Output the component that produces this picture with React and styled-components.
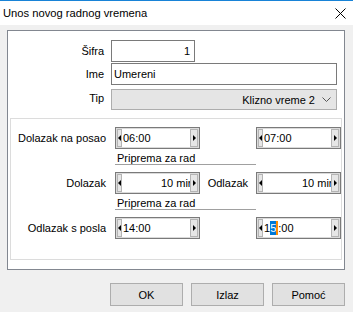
import React from "react";
import styled, { createGlobalStyle } from "styled-components";

const Global = createGlobalStyle`
  html, body { margin: 0; padding: 0; background: #f0f0f0; }
  body { font-family: "Liberation Sans", Arial, sans-serif; font-size: 11px; color: #000; }
  * { box-sizing: border-box; }
`;

const Window = styled.div`
  width: 353px;
  height: 312px;
  background: #f0f0f0;
  display: flex;
  flex-direction: column;
  overflow: hidden;
`;

const TitleBar = styled.div`
  height: 25px;
  flex: none;
  background: #fff;
  border-top: 1px solid #1883d7;
  display: flex;
  align-items: center;
  justify-content: space-between;
  padding: 0 7px 0 3px;
`;

const Title = styled.div`
  font-size: 11.2px;
`;

const Close = styled.svg`
  width: 11px;
  height: 11px;
  display: block;
`;

const Body = styled.div`
  padding: 5px 8px 0 7px;
  display: flex;
  flex-direction: column;
`;

const Panel = styled.div`
  height: 240px;
  background: #fff;
  border: 1px solid #828790;
  padding: 9px 1px 0 1px;
  display: flex;
  flex-direction: column;
`;

const FieldGrid = styled.div`
  display: grid;
  grid-template-columns: 95px 226px;
  column-gap: 7px;
  row-gap: 1px;
  align-items: center;
`;

const Label = styled.div`
  text-align: right;
  white-space: nowrap;
`;

const TextBox = styled.div`
  height: 22px;
  width: ${(p) => p.$w}px;
  border: 1px solid #7a7a7a;
  background: #fff;
  display: flex;
  align-items: center;
  justify-content: ${(p) => (p.$right ? "flex-end" : "flex-start")};
  padding: 0 4px 0 2px;
`;

const Combo = styled.div`
  height: 21px;
  width: 226px;
  margin-top: 3px;
  border: 1px solid #adadad;
  background: #e5e5e5;
  display: flex;
  align-items: center;
  justify-content: flex-end;
  padding-right: 5px;
  gap: 7px;
`;

const Group = styled.div`
  margin: 8px 1px 0 1px;
  height: 142px;
  border: 1px solid #dcdcdc;
  padding: 8px 0 0 0;
  display: grid;
  grid-template-columns: 104px 85px 56px 85px;
  align-content: start;
`;

const GLabel = styled.div`
  text-align: right;
  white-space: nowrap;
  padding-right: ${(p) => p.$pr || 9}px;
  align-self: center;
`;

const Spin = styled.div`
  height: 22px;
  width: 85px;
  border: 1px solid #7a7a7a;
  box-shadow: inset 0 0 0 1px #dadada;
  background: #fff;
  display: flex;
  align-items: stretch;
  padding: 1px;
  overflow: hidden;
`;

const SpinBtn = styled.div`
  flex: none;
  position: relative;
  z-index: 1;
  width: ${(p) => p.$w}px;
  background: #e6e6e6;
  border: 1px solid #b4b4b4;
  display: flex;
  align-items: center;
  justify-content: center;
`;

const Arrow = styled.div`
  width: 0;
  height: 0;
  border-top: 3px solid transparent;
  border-bottom: 3px solid transparent;
  ${(p) => (p.$left ? "border-right: 3px solid #000;" : "border-left: 3px solid #000;")}
`;

const SpinText = styled.div`
  flex: 1;
  min-width: 0;
  white-space: nowrap;
  display: flex;
  align-items: center;
  justify-content: ${(p) => (p.$right ? "flex-end" : "flex-start")};
  padding-left: 1px;
  margin-right: ${(p) => (p.$right ? -4 : 0)}px;
`;

const Sel = styled.span`
  background: #0078d7;
  color: #fff;
  line-height: 14px;
`;

const Caret = styled.span`
  display: inline-block;
  width: 2px;
  height: 14px;
  background: #ff8c00;
`;

const Section = styled.div`
  grid-column: 2 / span 2;
  border-bottom: 1px solid #a0a0a0;
  padding: 2px 0 0 2px;
  height: 16px;
  line-height: 14px;
  margin-bottom: 7px;
`;

const Spacer = styled.div`
  grid-column: ${(p) => p.$col};
`;

const Buttons = styled.div`
  display: flex;
  justify-content: flex-end;
  gap: 8px;
  margin-top: 13px;
`;

const Button = styled.div`
  width: 73px;
  height: 23px;
  background: #e1e1e1;
  border: 1px solid #adadad;
  display: flex;
  align-items: center;
  justify-content: center;
`;

function SpinBox({ value, right, children }) {
  return (
    <Spin>
      <SpinBtn $w={5}>
        <Arrow $left />
      </SpinBtn>
      <SpinText $right={right}>{children || value}</SpinText>
      <SpinBtn $w={8}>
        <Arrow />
      </SpinBtn>
    </Spin>
  );
}

export default function App() {
  return (
    <>
      <Global />
      <Window>
        <TitleBar>
          <Title>Unos novog radnog vremena</Title>
          <Close viewBox="0 0 11 11">
            <path d="M0.5 0.5 L10.5 10.5 M10.5 0.5 L0.5 10.5" stroke="#000" strokeWidth="1" />
          </Close>
        </TitleBar>
        <Body>
          <Panel>
            <FieldGrid>
              <Label>Šifra</Label>
              <TextBox $w={84} $right>1</TextBox>
              <Label>Ime</Label>
              <TextBox $w={226}>Umereni</TextBox>
              <Label>Tip</Label>
              <Combo>
                <span>Klizno vreme 2</span>
                <svg width="9" height="6" viewBox="0 0 9 6">
                  <path d="M0.5 0.5 L4.5 4.5 L8.5 0.5" fill="none" stroke="#555" strokeWidth="1" />
                </svg>
              </Combo>
            </FieldGrid>
            <Group>
              <GLabel>Dolazak na posao</GLabel>
              <SpinBox value="06:00" />
              <Spacer $col="3" />
              <SpinBox value="07:00" />

              <Section>Priprema za rad</Section>
              <Spacer $col="4" />

              <GLabel>Dolazak</GLabel>
              <SpinBox value="10 min" right />
              <GLabel $pr={8}>Odlazak</GLabel>
              <SpinBox value="10 min" right />

              <Section>Priprema za rad</Section>
              <Spacer $col="4" />

              <GLabel>Odlazak s posla</GLabel>
              <SpinBox value="14:00" />
              <Spacer $col="3" />
              <SpinBox>
                <span>1</span>
                <Sel>5</Sel>
                <Caret />
                <span>:00</span>
              </SpinBox>
            </Group>
          </Panel>
          <Buttons>
            <Button>OK</Button>
            <Button>Izlaz</Button>
            <Button>Pomoć</Button>
          </Buttons>
        </Body>
      </Window>
    </>
  );
}
